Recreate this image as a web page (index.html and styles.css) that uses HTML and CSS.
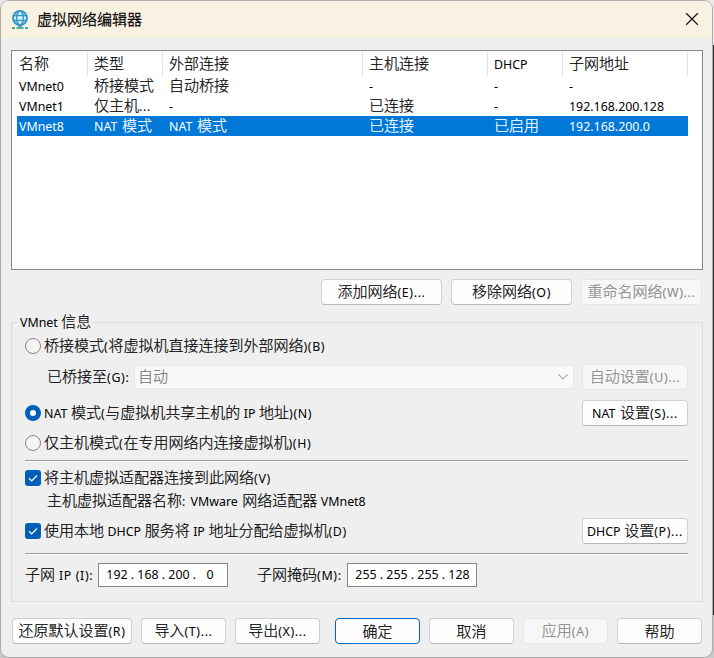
FILE: index.html
```html
<!DOCTYPE html>
<html lang="zh-CN">
<head>
<meta charset="utf-8">
<title>虚拟网络编辑器</title>
<link rel="stylesheet" href="styles.css">
</head>
<body>
<div class="window">
  <header class="titlebar">
    <svg class="globe" width="18" height="20" viewBox="0 0 18 20" fill="none">
      <circle cx="9" cy="8" r="7" fill="#d5eef7" stroke="#359cc6" stroke-width="2"/>
      <ellipse cx="9" cy="8" rx="3.4" ry="7" stroke="#359cc6" stroke-width="1.5"/>
      <path d="M2.500 5.500h13M2.500 10.500h13" stroke="#359cc6" stroke-width="1.400"/>
      <path d="M9 15v3" stroke="#359cc6" stroke-width="3"/>
      <path d="M1 18h3m1.500 0h7m1.500 0h3" stroke="#4fae9c" stroke-width="2"/>
    </svg>
    <h1>虚拟网络编辑器</h1>
    <svg class="close" width="14" height="14" viewBox="0 0 14 14" fill="none" stroke="#1a1a1a" stroke-width="1.300"><path d="M1.200 1.200l11.600 11.600M12.800 1.200L1.200 12.800"/></svg>
  </header>

  <div class="list">
    <div class="row head"><span>名称</span><span>类型</span><span>外部连接</span><span>主机连接</span><span class="l">DHCP</span><span>子网地址</span></div>
    <div class="row"><span class="l">VMnet0</span><span>桥接模式</span><span>自动桥接</span><span class="l">-</span><span class="l">-</span><span class="l">-</span></div>
    <div class="row"><span class="l">VMnet1</span><span>仅主机<b class="l">...</b></span><span class="l">-</span><span>已连接</span><span class="l">-</span><span class="l">192.168.200.128</span></div>
    <div class="row selected"><span class="l">VMnet8</span><span><b class="l n">NAT </b>模式</span><span><b class="l n">NAT </b>模式</span><span>已连接</span><span>已启用</span><span class="l">192.168.200.0</span></div>
  </div>

  <div class="list-actions">
    <button class="wide">添加网络<b class="l">(E)...</b></button>
    <button class="wide">移除网络<b class="l">(O)</b></button>
    <button class="wide" disabled>重命名网络<b class="l">(W)...</b></button>
  </div>

  <section class="group">
    <h2><b class="l w">VMnet </b>信息</h2>
    <div class="line r1"><i class="radio"></i><span class="t1">桥接模式<b class="l">(</b>将虚拟机直接连接到外部网络<b class="l">)(B)</b></span></div>
    <div class="line r2">
      <span class="bridge-label">已桥接至<b class="l">(G):</b></span>
      <div class="combo"><span>自动</span><svg width="10" height="6" viewBox="0 0 10 6" fill="none" stroke="#aaa" stroke-width="1.100"><path d="M.5.5L5 5 9.500.5"/></svg></div>
      <button class="side" disabled>自动设置<b class="l">(U)...</b></button>
    </div>
    <div class="line r3"><i class="radio on"></i><span><b class="l w">NAT </b>模式<b class="l">(</b>与虚拟机共享主机的<b class="l w"> IP </b>地址<b class="l">)(N)</b></span><button class="side"><b class="l n">NAT </b>设置<b class="l">(S)...</b></button></div>
    <div class="line r4"><i class="radio"></i><span>仅主机模式<b class="l">(</b>在专用网络内连接虚拟机<b class="l">)(H)</b></span></div>
    <hr>
    <div class="line r5"><i class="check"><svg width="16" height="16" viewBox="0 0 16 16"><path d="M4 8.200l2.700 2.600L12 5.500"/></svg></i><span>将主机虚拟适配器连接到此网络<b class="l">(V)</b></span></div>
    <div class="line r6"><span>主机虚拟适配器名称<b class="l">:</b><b class="l n"> VMware </b>网络适配器<b class="l w"> VMnet8</b></span></div>
    <div class="line r7"><i class="check"><svg width="16" height="16" viewBox="0 0 16 16"><path d="M4 8.200l2.700 2.600L12 5.500"/></svg></i><span>使用本地<b class="l w"> DHCP </b>服务将<b class="l w"> IP </b>地址分配给虚拟机<b class="l">(D)</b></span><button class="side"><b class="l w">DHCP </b>设置<b class="l">(P)...</b></button></div>
    <hr>
    <div class="line r8">
      <span class="ip-label">子网<b class="l"> IP (I):</b></span>
      <div class="ip l"><span>192</span><em>.</em><span>168</span><em>.</em><span>200</span><em>.</em><span>0</span></div>
      <span class="mask-label">子网掩码<b class="l">(M):</b></span>
      <div class="ip l"><span>255</span><em>.</em><span>255</span><em>.</em><span>255</span><em>.</em><span>128</span></div>
    </div>
  </section>

  <footer>
    <button class="reset">还原默认设置<b class="l">(R)</b></button>
    <button>导入<b class="l">(T)...</b></button>
    <button>导出<b class="l">(X)...</b></button>
    <button class="primary">确定</button>
    <button>取消</button>
    <button disabled>应用<b class="l">(A)</b></button>
    <button>帮助</button>
  </footer>
</div>
</body>
</html>
```
FILE: styles.css
```css
* { box-sizing: border-box; }
body {
  margin: 0;
  width: 714px;
  height: 658px;
  overflow: hidden;
  background: linear-gradient(#e8e8e8 45px, #2b2b2b 45px, #2b2b2b 615px, #c9c9c9 615px);
  font: 300 15px/20px "Noto Sans CJK SC", sans-serif;
  color: #000;
  -webkit-text-stroke: .2px;
}
.window {
  width: 713px;
  height: 658px;
  background: #efefef;
  border: 1px solid #adadad;
  border-radius: 9px;
  overflow: hidden;
}
.l {
  font-family: "Noto Sans", "Noto Sans CJK SC", sans-serif;
  font-size: 12.4px;
  font-weight: 400;
  white-space: pre;
  -webkit-text-stroke: 0;
}
b.l { letter-spacing: .65px; }
b.l.w { letter-spacing: 0; word-spacing: .3px; }
b.l.n { letter-spacing: 0; word-spacing: 1.3px; }
.titlebar {
  display: flex;
  align-items: center;
  height: 37px;
  padding: 0 13px 2px 10px;
  background: #f9f2e3;
}
.globe { margin-top: 2px; }
h1 {
  flex: 1;
  margin: 0 0 0 8px;
  font-size: 15px;
  font-weight: 300;
  -webkit-text-stroke: .35px;
}
.list {
  width: 692px;
  height: 220px;
  margin: 12px 0 0 10px;
  padding: 1px 5px;
  background: #fff;
  border: 1px solid #828790;
}
.row {
  display: grid;
  grid-template-columns: 71px 75px 200px 125px 75px 125px;
  width: 671px;
  height: 20px;
  line-height: 20px;
  white-space: nowrap;
}
.row > span { height: 20px; padding-left: 6px; line-height: 18px; }
.row > span:first-child { padding-left: 2px; }
.row > span.l { line-height: 21px; }
.row b.l { line-height: 16px; }
.row > .head { height: 24px; }
.row.head { height: 24px; }
.row.head > span { height: 24px; line-height: 22px; border-right: 1px solid #e2e2e2; }
.row.head > span.l { line-height: 25px; }
.selected { background: #0078d7; color: #fff; }
.list-actions {
  display: flex;
  gap: 9px;
  margin: 9px 0 0 320px;
}
button {
  flex: none;
  width: 85px;
  height: 26px;
  padding: 0 0 1px;
  font: inherit;
  line-height: 20px;
  color: #000;
  white-space: nowrap;
  background: #fdfdfd;
  border: 1px solid #d0d0d0;
  border-bottom-color: #b9b9b9;
  border-radius: 4px;
}
button:disabled {
  color: #888;
  background: #f7f7f7;
  border-color: #e6e6e6;
}
.wide { width: 121px; }
.side { width: 106px; margin-left: auto; }
.group {
  width: 692px;
  height: 280px;
  margin: 17px 0 0 10px;
  padding: 0 14px 0 13px;
  border: 1px solid #dcdcdc;
}
h2 {
  width: 74px;
  height: 20px;
  margin: -12px 0 3px -7px;
  padding-left: 2px;
  font: inherit;
  line-height: 20px;
  white-space: nowrap;
  background: #efefef;
}
.line { display: flex; align-items: center; white-space: nowrap; }
.line > i + span { margin-left: 3px; }
.r1 { height: 24px; }
.r2 { height: 38px; padding-left: 22px; }
.r3 { height: 34px; }
.r4 { height: 26px; }
.r5 { height: 24px; }
.r6 { height: 22px; padding-left: 22px; }
.r7 { height: 38px; }
.r8 { height: 40px; }
.bridge-label { width: 87px; }
.radio {
  width: 16px;
  height: 16px;
  border: 1px solid #858585;
  border-radius: 50%;
  background: #f5f5f5;
}
.radio.on { border: 5px solid #005fb8; background: #fff; }
.check { width: 16px; height: 16px; border-radius: 3px; background: #005fb8; }
.check svg { display: block; fill: none; stroke: #fff; stroke-width: 1.2; }
.combo {
  display: flex;
  align-items: center;
  justify-content: space-between;
  width: 440px;
  height: 24px;
  padding: 0 5px 2px 3px;
  color: #777;
  background: #f9f9f9;
  border: 1px solid #e7e7e7;
}
.combo svg { margin-top: 2px; }
hr {
  height: 2px;
  margin: 4px 0;
  border: 0;
  border-top: 1px solid #9d9d9d;
  background: #fff;
}
.r7 + hr { margin: 3px 0 0; }
.ip-label { width: 73px; }
.mask-label { width: 119px; padding-left: 29px; }
.ip {
  display: flex;
  align-items: center;
  width: 130px;
  height: 24px;
  padding: 0 0 1px 5px;
  background: #fff;
  border: 1px solid #868686;
}
.ip span { width: 26px; text-align: center; }
.ip em { width: 5px; font-style: normal; text-align: center; }
footer {
  display: flex;
  gap: 9px;
  margin: 16px 0 0 11px;
}
.reset { width: 120px; }
.primary { margin-left: 6px; border-color: #0067c0; }
```
